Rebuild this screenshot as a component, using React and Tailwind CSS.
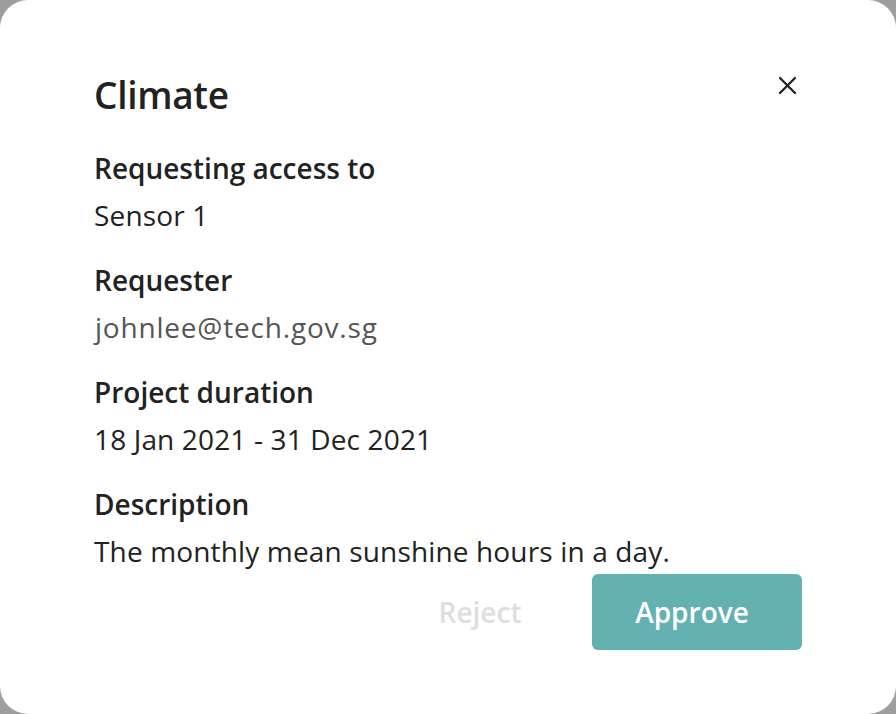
const Field = ({ label, value, muted, first }) => (
  <div className={first ? "mt-[30px]" : "mt-[29px]"}>
    <div className="h-[36px] leading-[36px] text-[28px] font-semibold text-[#222222]">{label}</div>
    <div
      className={`mt-[11px] h-[36px] leading-[36px] text-[28px] ${
        muted ? "pl-[1px] tracking-[0.8px] text-[#555555]" : "tracking-[0.15px] text-[#222222]"
      }`}
    >
      {value}
    </div>
  </div>
);

export default function App() {
  return (
    <div className="h-[714px] w-[896px] bg-[#9e9e9e]" style={{ fontFamily: "'Open Sans', Lato, sans-serif" }}>
      <div className="h-full w-full rounded-[28px] bg-white px-[94px] pt-[70px]">
        {/* Header */}
        <div className="flex items-start justify-between">
          <h1 className="h-[50px] leading-[50px] text-[37px] font-semibold tracking-[-0.3px] text-[#222222]">Climate</h1>
          <button className="mt-[5px] mr-[5px] flex h-[20px] w-[20px] items-center justify-center text-[#222222]">
            <svg width="19" height="19" viewBox="0 0 19 19" fill="none" stroke="currentColor" strokeWidth="2.3" strokeLinecap="round">
              <path d="M2 2 L17 17" />
              <path d="M17 2 L2 17" />
            </svg>
          </button>
        </div>

        <Field first label="Requesting access to" value="Sensor 1" />
        <Field label="Requester" value="johnlee@tech.gov.sg" muted />
        <Field label="Project duration" value="18 Jan 2021 - 31 Dec 2021" />
        <Field label="Description" value="The monthly mean sunshine hours in a day." />

        {/* Actions */}
        <div className="mt-[5px] flex justify-end gap-[7px]">
          <button className="h-[76px] w-[210px] rounded-[6px] text-[28px] font-semibold text-[#dedede]">Reject</button>
          <button className="h-[76px] w-[210px] rounded-[6px] bg-[#64b1b1] pr-[10px] text-[28px] font-semibold text-white">
            Approve
          </button>
        </div>
      </div>
    </div>
  );
}
